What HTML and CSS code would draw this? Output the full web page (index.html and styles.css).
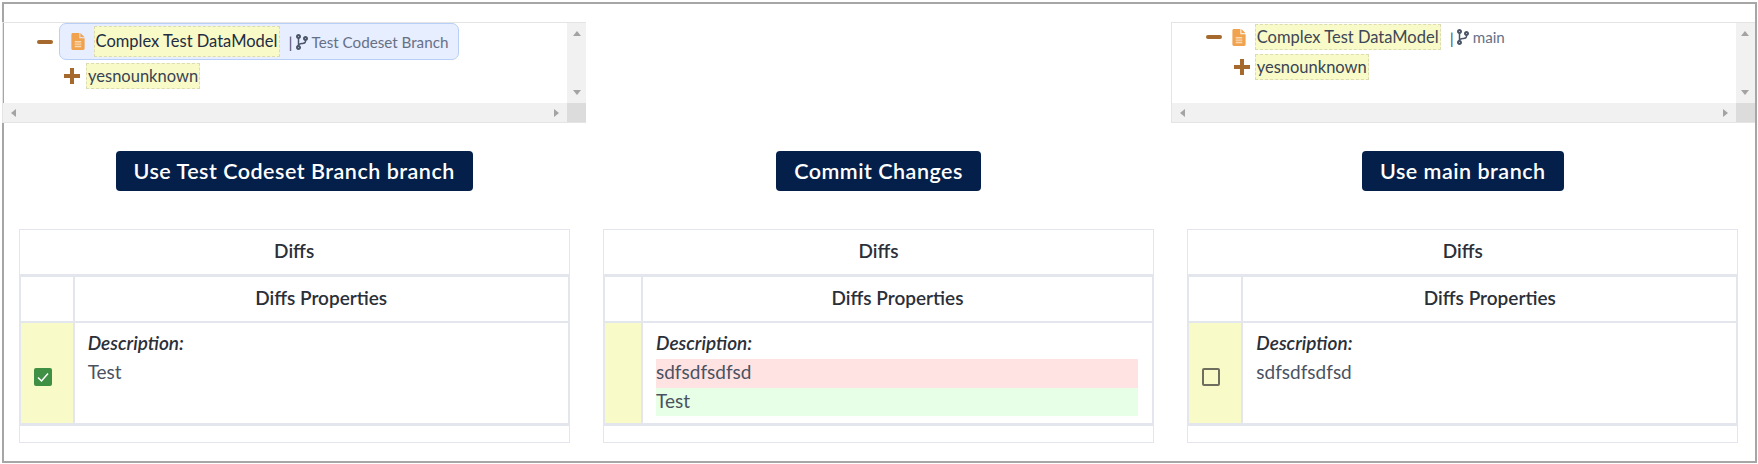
FILE: index.html
```html
<!DOCTYPE html>
<html>
<head>
  <title>Merge Diffs</title>
  <link rel="stylesheet" href="styles.css">
</head>
<body>
  <svg class="icon-defs" width="0" height="0">
    <symbol id="icon-branch" viewBox="0 0 384 512">
      <path d="M384 144c0-44.2-35.8-80-80-80s-80 35.8-80 80c0 36.4 24.3 67.1 57.5 76.8-.6 16.1-4.2 28.5-11 36.9-15.4 19.2-49.3 22.4-85.2 25.7-28.2 2.6-57.4 5.4-81.3 16.9v-144c32.5-10.2 56-40.5 56-76.3 0-44.2-35.8-80-80-80S0 35.8 0 80c0 35.8 23.5 66.1 56 76.3v199.3C23.5 365.9 0 396.2 0 432c0 44.2 35.8 80 80 80s80-35.8 80-80c0-34-21.2-63.1-51.2-74.6 3.1-5.2 7.8-9.8 14.9-13.4 16.2-8.2 40.4-10.4 66.1-12.8 42.2-3.9 90-8.4 118.2-43.4 14-17.4 21.1-39.8 21.5-67.9 31.6-10.8 54.5-40.7 54.5-75.9zM80 64c8.8 0 16 7.2 16 16s-7.2 16-16 16-16-7.2-16-16 7.2-16 16-16zm0 384c-8.8 0-16-7.2-16-16s7.2-16 16-16 16 7.2 16 16-7.2 16-16 16zm224-320c8.8 0 16 7.2 16 16s-7.2 16-16 16-16-7.2-16-16 7.2-16 16-16z"/>
    </symbol>
    <symbol id="icon-file" viewBox="0 0 14 18">
      <path d="M1.5 0H8.5V5.5H14V16.5C14 17.3 13.3 18 12.5 18H1.5C.7 18 0 17.3 0 16.5V1.5C0 .7.7 0 1.5 0ZM9.5 0 14 4.5H9.5Z"/>
      <path class="file-lines" d="M3.5 8.5H10.5V10H3.5ZM3.5 11H10.5V12.5H3.5ZM3.5 13.5H10.5V15H3.5Z"/>
    </symbol>
  </svg>

  <div class="frame">
    <div class="col">
      <div class="tree-box">
        <div class="tree-main">
          <div class="tree-content tree-left">
            <div class="node">
              <span class="minus"></span>
              <div class="pill">
                <svg class="file-icon"><use href="#icon-file"/></svg>
                <span class="label label-root">Complex Test DataModel</span>
                <span class="pipe">|</span>
                <svg class="branch-icon"><use href="#icon-branch"/></svg>
                <span class="branch-name">Test Codeset Branch</span>
              </div>
            </div>
            <div class="node child">
              <span class="plus"></span>
              <span class="label">yesnounknown</span>
            </div>
          </div>
          <div class="vbar"><span class="arrow up"></span><span class="arrow down"></span></div>
        </div>
        <div class="hbar">
          <div class="htrack"><span class="arrow left"></span><span class="arrow right"></span></div>
          <div class="corner"></div>
        </div>
      </div>
      <button class="action">Use Test Codeset Branch branch</button>
      <div class="diffs">
        <div class="diffs-title">Diffs</div>
        <div class="props props-wide">
          <div class="head-blank"></div>
          <div class="head-title">Diffs Properties</div>
          <div class="pick"><span class="check checked"><svg viewBox="0 0 18 18"><path d="M4 9.5 7.5 13 14 5.5"/></svg></span></div>
          <div class="value">
            <div class="prop-name">Description:</div>
            <div class="line">Test</div>
          </div>
        </div>
      </div>
    </div>

    <div class="col">
      <div class="tree-spacer"></div>
      <button class="action">Commit Changes</button>
      <div class="diffs">
        <div class="diffs-title">Diffs</div>
        <div class="props props-narrow">
          <div class="head-blank"></div>
          <div class="head-title">Diffs Properties</div>
          <div class="pick"></div>
          <div class="value">
            <div class="prop-name">Description:</div>
            <div class="line removed">sdfsdfsdfsd</div>
            <div class="line added">Test</div>
          </div>
        </div>
      </div>
    </div>

    <div class="col">
      <div class="tree-box">
        <div class="tree-main">
          <div class="tree-content tree-right">
            <div class="node">
              <span class="minus"></span>
              <svg class="file-icon"><use href="#icon-file"/></svg>
              <span class="label label-root">Complex Test DataModel</span>
              <span class="pipe">|</span>
              <svg class="branch-icon"><use href="#icon-branch"/></svg>
              <span class="branch-name">main</span>
            </div>
            <div class="node child">
              <span class="plus"></span>
              <span class="label">yesnounknown</span>
            </div>
          </div>
          <div class="vbar"><span class="arrow up"></span><span class="arrow down"></span></div>
        </div>
        <div class="hbar">
          <div class="htrack"><span class="arrow left"></span><span class="arrow right"></span></div>
          <div class="corner"></div>
        </div>
      </div>
      <button class="action">Use main branch</button>
      <div class="diffs">
        <div class="diffs-title">Diffs</div>
        <div class="props props-wide">
          <div class="head-blank"></div>
          <div class="head-title">Diffs Properties</div>
          <div class="pick"><span class="check"></span></div>
          <div class="value">
            <div class="prop-name">Description:</div>
            <div class="line">sdfsdfsdfsd</div>
          </div>
        </div>
      </div>
    </div>
  </div>
</body>
</html>
```

FILE: styles.css
```css
* {
  box-sizing: border-box;
}

html, body {
  margin: 0;
  padding: 0;
  background: #fff;
}

body {
  width: 1758px;
  height: 464px;
  overflow: hidden;
  padding: 2px 1px 1px 2px;
  font-family: "Lato", "Open Sans", sans-serif;
  font-size: 19px;
  color: #343a40;
}

.icon-defs {
  position: absolute;
}

.frame {
  height: 461px;
  box-shadow: inset 0 0 0 2px #a6a6a6;
  padding: 20px 2px 0 0;
  display: flex;
}

.col {
  flex: 1 1 0;
  min-width: 0;
  display: flex;
  flex-direction: column;
  align-items: center;
}

/* tree */
.tree-box {
  width: 100%;
  height: 101px;
  border: 1px solid #e4e4e4;
  border-right: 0;
  display: flex;
  flex-direction: column;
}

.tree-spacer {
  height: 101px;
}

.tree-main {
  flex: 1;
  display: flex;
  min-height: 0;
}

.tree-content {
  flex: 1;
  min-width: 0;
}

.tree-left {
  padding-left: 34px;
}

.tree-right {
  padding: 1px 0 0 34px;
}

.node {
  display: flex;
  align-items: center;
}

.child {
  margin-top: 3px;
  padding-left: 27px;
}

.tree-right .child {
  margin-top: 4px;
  padding-left: 28px;
}

.tree-left .child .plus {
  margin-right: 6px;
}

.tree-right .child .plus {
  margin-right: 5px;
}

.minus {
  width: 16px;
  height: 4px;
  border-radius: 2px;
  background: #a5692e;
  margin-right: 6px;
}

.plus {
  width: 16px;
  height: 16px;
  background:
    linear-gradient(#a5692e, #a5692e) center / 16px 4px no-repeat,
    linear-gradient(#a5692e, #a5692e) center / 4px 16px no-repeat;
}

.tree-right .minus {
  margin-right: 10px;
}

.pill {
  display: flex;
  align-items: center;
  width: 400px;
  height: 37px;
  padding-left: 11px;
  background: #e6eeff;
  border: 1px solid #b8cff6;
  border-radius: 7px;
}

.file-icon {
  width: 14px;
  height: 17px;
  fill: #f0a24f;
  flex-shrink: 0;
  margin-right: 9px;
}

.tree-left .file-icon {
  margin-right: 8.5px;
}

.file-lines {
  fill: #f9d9b0;
}

.label {
  display: inline-block;
  padding: 0 1px;
  height: 26px;
  line-height: 24px;
  background: #f8fac8;
  border: 1px dashed #dcdcb4;
  font-size: 16.5px;
  white-space: nowrap;
  color: #3a4354;
}

.label-root {
  width: 186px;
  height: 31px;
  line-height: 29px;
  color: #1f2d44;
  text-align: center;
}

.tree-right .label-root {
  height: 26px;
  line-height: 24px;
  color: #3f4656;
}

.pipe {
  margin-left: 9px;
  font-size: 16px;
  color: #4a5568;
}

.branch-icon {
  width: 12px;
  height: 16px;
  margin-left: 3px;
  fill: #4a5568;
  flex-shrink: 0;
}

.branch-name {
  margin-left: 4px;
  font-size: 15.2px;
  color: #667085;
  white-space: nowrap;
}

/* fake scrollbars */
.vbar {
  width: 19px;
  background: #f1f1f1;
  display: flex;
  flex-direction: column;
  justify-content: space-between;
  align-items: center;
  padding: 8px 0;
}

.hbar {
  height: 19px;
  display: flex;
}

.htrack {
  flex: 1;
  background: #f1f1f1;
  display: flex;
  justify-content: space-between;
  align-items: center;
  padding: 0 8px;
}

.corner {
  width: 19px;
  background: #dcdcdc;
}

.arrow {
  width: 0;
  height: 0;
  border-style: solid;
  border-color: transparent;
}

.up {
  border-width: 0 4px 5px;
  border-bottom-color: #a3a3a3;
}

.down {
  border-width: 5px 4px 0;
  border-top-color: #a3a3a3;
}

.left {
  border-width: 4px 5px 4px 0;
  border-right-color: #a3a3a3;
}

.right {
  border-width: 4px 0 4px 5px;
  border-left-color: #a3a3a3;
}

/* buttons */
.action {
  margin-top: 28px;
  height: 40px;
  padding: 0 18px;
  border: 0;
  border-radius: 4px;
  background: #04204a;
  color: #fff;
  font-family: inherit;
  font-size: 21.5px;
  letter-spacing: 0.5px;
  font-weight: 600;
}

/* diff tables */
.diffs {
  width: 551px;
  height: 214px;
  margin-top: 38px;
  border: 1px solid #e3e6ec;
}

.diffs-title {
  height: 47px;
  line-height: 42px;
  text-align: center;
  font-weight: 600;
  color: #2b2f38;
  border-bottom: 3px solid #e3e6ec;
}

.props {
  display: grid;
  grid-template-rows: 46px 102px;
  border: 1px solid #e3e6ec;
  border-top: 0;
}

.props-wide {
  grid-template-columns: 54px 1fr;
}

.props-narrow {
  grid-template-columns: 38px 1fr;
}

.head-blank,
.head-title {
  border-bottom: 2px solid #e3e6ec;
}

.head-blank,
.pick {
  border-right: 2px solid #e3e6ec;
}

.head-title {
  line-height: 42px;
  text-align: center;
  font-weight: 600;
  color: #2b2f38;
}

.pick {
  background: #f8fac8;
  padding: 45px 0 0 13px;
  border-bottom: 2px solid #e3e6ec;
}

.value {
  padding: 6px 14px 0 13px;
  border-bottom: 2px solid #e3e6ec;
}

.prop-name {
  height: 30px;
  line-height: 28px;
  font-style: italic;
  font-weight: 600;
  color: #2b2f38;
}

.line {
  height: 28.5px;
  line-height: 26px;
  color: #4a5261;
}

.removed {
  background: #ffe3e3;
}

.added {
  background: #e6ffe6;
}

.check {
  display: block;
  width: 18px;
  height: 18px;
  border: 2px solid #6e6e5e;
  border-radius: 2px;
}

.check.checked {
  border: 0;
  background: #3f8f45;
}

.check svg {
  display: block;
  width: 18px;
  height: 18px;
  fill: none;
  stroke: #fff;
  stroke-width: 1.5;
}
```
